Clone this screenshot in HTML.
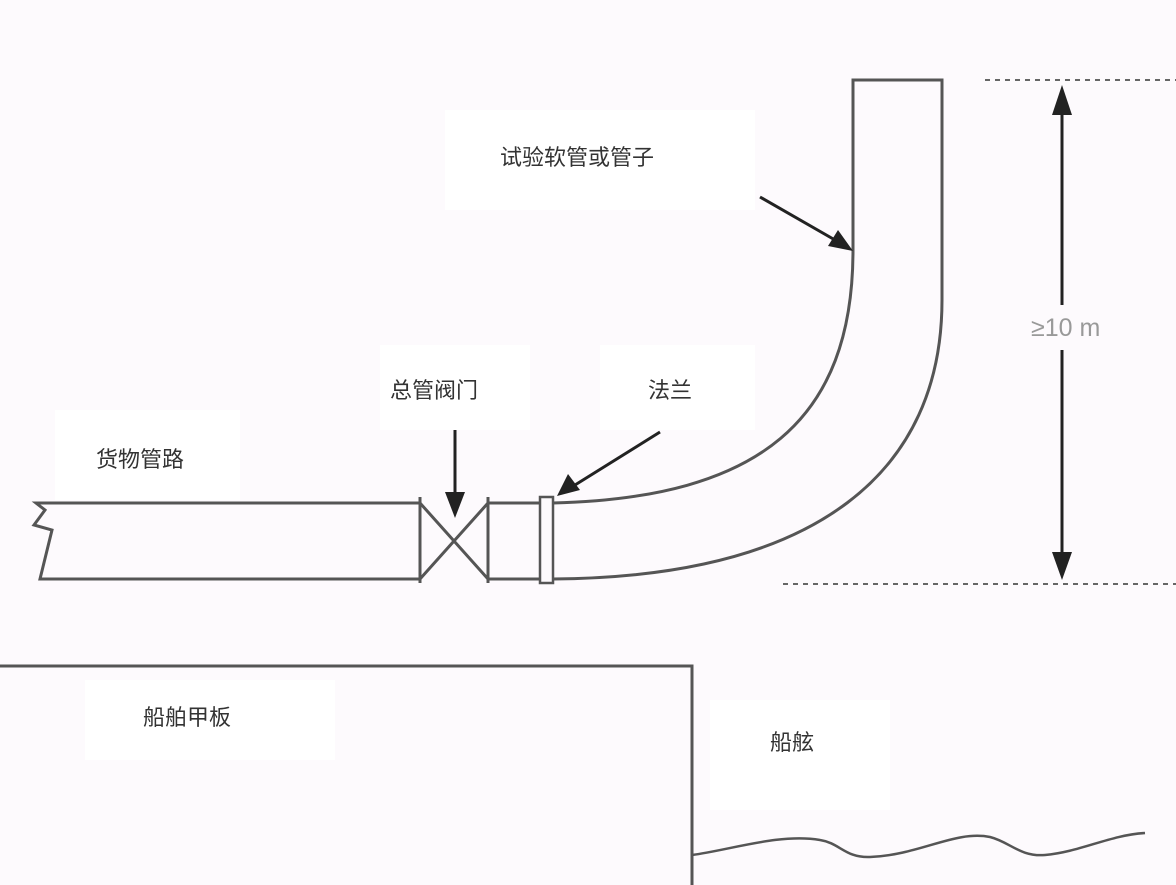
<!DOCTYPE html>
<html><head><meta charset="utf-8"><style>
html,body{margin:0;padding:0;background:#fdfafd;}
svg{display:block}
text{font-family:"Liberation Sans","Noto Sans CJK SC",sans-serif;fill:#333;font-size:22px}
</style></head><body>
<svg width="1176" height="885" viewBox="0 0 1176 885" xmlns="http://www.w3.org/2000/svg">
<rect width="1176" height="885" fill="#fdfafd"/>
<rect x="445" y="110" width="310" height="100" fill="#fff"/>
<rect x="380" y="345" width="150" height="85" fill="#fff"/>
<rect x="600" y="345" width="155" height="85" fill="#fff"/>
<rect x="55" y="410" width="185" height="90" fill="#fff"/>
<rect x="85" y="680" width="250" height="80" fill="#fff"/>
<rect x="710" y="700" width="180" height="110" fill="#fff"/>
<g fill="none" stroke="#555" stroke-width="3">
<path d="M420,503 L36,503 L45,510 L34,525 L52,530 L40,579 L420,579"/>
<path d="M420,497 L420,583 M488,497 L488,583 M420,503 L488,579 M488,503 L420,579"/>
<path d="M488,503 L540,503 M488,579 L540,579"/>
<rect x="540" y="497" width="13" height="86" stroke-width="2.5"/>
<path d="M553,503 C760,498 853,420 853,250 L853,80 L942,80 L942,300 C942,470 820,577 553,579"/>
<path d="M0,666 L692,666 L692,885"/>
<path d="M692,855 C730,850 780,833 820,840 C840,843 845,858 870,857 C920,855 955,830 990,837 C1010,842 1020,857 1045,855 C1080,852 1110,835 1145,833" stroke-width="2.5"/>
</g>
<g stroke="#666" stroke-width="2" stroke-dasharray="5,5">
<path d="M985,80 L1176,80 M783,584 L1176,584"/>
</g>
<g stroke="#222" stroke-width="3" fill="#222">
<path d="M1062,110 L1062,305 M1062,350 L1062,555"/>
<path d="M1062,85 L1052,115 L1072,115 Z" stroke="none"/>
<path d="M1062,580 L1052,552 L1072,552 Z" stroke="none"/>
<path d="M760,197 L835,240"/>
<path d="M853,251 L828,246 L838,230 Z" stroke="none"/>
<path d="M660,432 L575,485"/>
<path d="M557,496 L568,474 L580,490 Z" stroke="none"/>
<path d="M455,430 L455,495"/>
<path d="M455,518 L445,492 L465,492 Z" stroke="none"/>
</g>
<text x="500" y="165">试验软管或管子</text>
<text x="390" y="398">总管阀门</text>
<text x="648" y="398">法兰</text>
<text x="96" y="467">货物管路</text>
<text x="143" y="725">船舶甲板</text>
<text x="770" y="750">船舷</text>
<text x="1031" y="336" style="fill:#999;font-size:25px">≥10 m</text>
</svg>
</body></html>
